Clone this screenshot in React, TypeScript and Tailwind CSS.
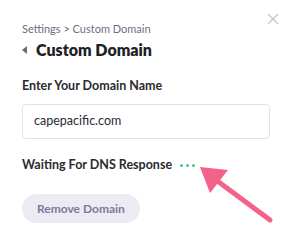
import React from 'react';

const App = () => {
    return (
        <div className="relative w-[291px] h-[251px] bg-white overflow-hidden font-['Lato','Liberation_Sans',sans-serif]">
            <button className="absolute left-[266px] top-[12px] w-[14px] h-[14px] flex items-center justify-center">
                <svg width="12" height="12" viewBox="0 0 12 12">
                    <path d="M1 1 L11 11 M11 1 L1 11" stroke="#c4c4c8" strokeWidth="1.2" />
                </svg>
            </button>
            <div className="flex flex-col pl-[22px] pr-[21px] pt-[22px]">
                <div className="text-[11px] leading-[14px] text-[#6e6d85]">
                    Settings &gt; Custom Domain
                </div>
                <div className="flex items-center gap-[9px] mt-[3px]">
                    <svg width="5" height="8" viewBox="0 0 5 8">
                        <path d="M5 0 L0 4 L5 8 Z" fill="#6b6b6b" />
                    </svg>
                    <span className="text-[16px] leading-[22px] font-extrabold text-[#1f1f24]">
                        Custom Domain
                    </span>
                </div>
                <div className="mt-[17px] text-[12.5px] leading-[16px] font-bold text-[#2a2a30]">
                    Enter Your Domain Name
                </div>
                <div className="mt-[10px] h-[35px] border border-[#e3e1ee] rounded-[4px] flex items-center px-[11px] text-[12.5px] text-[#2a2a30]">
                    capepacific.com
                </div>
                <div className="mt-[18px] flex items-center">
                    <span className="text-[12.5px] leading-[16px] font-bold text-[#2a2a30]">
                        Waiting For DNS Response
                    </span>
                    <span className="flex gap-[3px] ml-[8px]">
                        <span className="w-[3px] h-[3px] rounded-full bg-[#2fd196]" />
                        <span className="w-[3px] h-[3px] rounded-full bg-[#2fd196]" />
                        <span className="w-[3px] h-[3px] rounded-full bg-[#2fd196]" />
                    </span>
                </div>
                <div className="mt-[21px]">
                    <button className="h-[29px] px-[15px] rounded-full bg-[#eceaf2] text-[12px] font-bold text-[#7b7a9c]">
                        Remove Domain
                    </button>
                </div>
            </div>
            <svg className="absolute left-0 top-0 pointer-events-none" width="291" height="251" viewBox="0 0 291 251">
                <line x1="270" y1="220" x2="212" y2="177" stroke="#f4628a" strokeWidth="5" strokeLinecap="round" />
                <path d="M200 167 L228 170 L210 193 Z" fill="#f4628a" />
            </svg>
        </div>
    );
};

export default App;
